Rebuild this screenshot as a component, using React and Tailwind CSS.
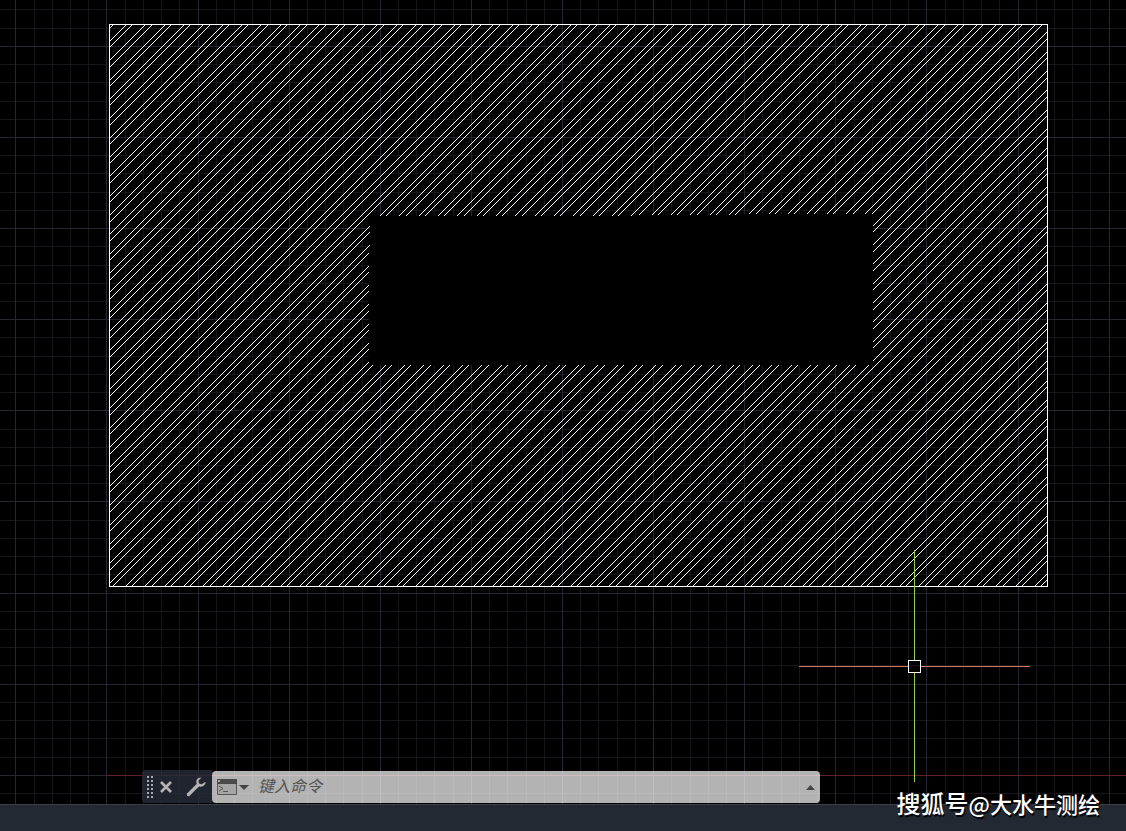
import React, { useState } from 'react';

const GRID_STEP = 91.11 / 5;
const HATCH_STEP = 19.342;

const frame = { left: 109, top: 24, right: 1047, bottom: 586 };

// one line per grid step, every fifth one is a major line
const gridLines = (origin, length) => {
  const lines = [];
  for (let i = 0; i * GRID_STEP + origin < length; i++) {
    lines.push({ pos: Math.floor(i * GRID_STEP + origin), major: i % 5 === 0 });
  }
  return lines;
};

const verticals = gridLines(15.8 - 91.11, 2600);
const horizontals = gridLines(46.35 - 91.11, 1600);

// ANSI32 style hatch: pairs of 45 degree lines, x + y = c
// each one is a filled sliver, one pixel wide on every row
const hatchPath = () => {
  const { left, top, right, bottom } = frame;
  let d = '';
  for (let n = -1; n < 78; n++) {
    [0, HATCH_STEP / 3].forEach((shift) => {
      const c = Math.round(150 + n * HATCH_STEP + shift);
      const x1 = Math.max(left, c - bottom);
      const x2 = Math.min(right, c - top);
      if (x2 > x1) {
        d += `M${x1 - 0.5} ${c - x1 + 1}h1L${x2 + 1.5} ${c - x2}h-1z`;
      }
    });
  }
  return d;
};

function Drawing() {
  return (
    <svg className="absolute inset-0 h-full w-full" shapeRendering="crispEdges" fill="none" aria-hidden="true">
      <g transform="translate(0.5 0.5)">
        {[false, true].map((major) => (
          <g key={String(major)} stroke={major ? '#242633' : '#15151a'}>
            {verticals.filter((line) => line.major === major).map((line) => (
              <line key={`v${line.pos}`} x1={line.pos} x2={line.pos} y1="-1" y2="3000" />
            ))}
            {horizontals.filter((line) => line.major === major).map((line) => (
              <line key={`h${line.pos}`} x1="-1" x2="4000" y1={line.pos} y2={line.pos} />
            ))}
          </g>
        ))}
      </g>
      <path d="M106 775H4000v1H106z" fill="#641f28" />
      <path d={hatchPath()} fill="#fff" />
      <rect x="109.5" y="24.5" width="938" height="562" stroke="#fff" />
      <path d="M370 216H632V215H740V214H873V365H369V290z" fill="#000" />

      {/* crosshair */}
      <path d="M799 666h109v1h-109zM921 666h109v1h-109z" fill="#d2785f" />
      <path d="M914 550h1v110h-1zM914 673h1v109h-1z" fill="#92d050" />
      <rect x="908.5" y="660.5" width="12" height="12" stroke="#fff" />
    </svg>
  );
}

function CommandLine() {
  const [command, setCommand] = useState('');

  return (
    <form
      onSubmit={(e) => e.preventDefault()}
      className="relative ml-[142px] flex h-[33px] w-[678px] max-w-full items-center"
    >
      <div className="flex h-full w-[70px] shrink-0 items-center rounded-l-sm bg-[#272d3a]/80">
        <svg className="ml-1 h-[22px] w-2 shrink-0" viewBox="0 0 8 22" fill="#a9abae" shapeRendering="crispEdges" aria-hidden="true">
          {[0, 4, 8, 12, 16, 20].map((y) => (
            <path key={y} d={`M1 ${y}h2v2h-2zM5 ${y}h2v2h-2z`} />
          ))}
        </svg>
        <button type="button" aria-label="关闭" className="ml-0.5 flex h-8 w-5 items-center justify-center">
          <svg className="h-3 w-3" viewBox="0 0 12 12" stroke="#b4b4b4" strokeWidth="2.6" aria-hidden="true">
            <path d="M1 1L11 11M11 1L1 11" />
          </svg>
        </button>
        <button type="button" aria-label="自定义" className="ml-2 flex h-8 w-6 items-center justify-center">
          <svg className="h-5 w-5" viewBox="0 0 20 20" aria-hidden="true">
            <path d="M2.500 17.500L12 8" stroke="#b4b4b4" strokeWidth="3.4" strokeLinecap="round" />
            <path d="M15.500 .5C11.500 .3 9.600 3.300 10.600 6.600L13.400 9.400C16.600 10.400 19.800 8.400 19.500 4.800L15.800 7.200L12.900 6.600L12.500 3.600z" fill="#b4b4b4" />
          </svg>
        </button>
      </div>
      <div className="flex h-8 min-w-0 flex-1 items-center rounded-sm bg-white/70">
        <button type="button" aria-label="最近使用的命令" className="ml-1 flex h-8 w-9 shrink-0 items-center">
          <svg className="h-4 w-9" viewBox="0 0 36 16" aria-hidden="true">
            <path d="M1.500 .5h19v15h-19z" fill="#a5a5a5" stroke="#555" />
            <path d="M1 0h20v5H1z" fill="#4a4a4a" />
            <path d="M2 1h2v2H2z" fill="#a5a5a5" />
            <path d="M3 7l4 2.500l-4 2.500M7 12.500h5" fill="none" stroke="#555" />
            <path d="M23 6h10l-5 5z" fill="#444" />
          </svg>
        </button>
        <input
          type="text"
          aria-label="命令"
          placeholder="键入命令"
          value={command}
          onChange={(e) => setCommand(e.target.value)}
          className="ml-1.5 h-8 min-w-0 flex-1 bg-transparent pb-1 font-['Noto_Sans_CJK_SC',sans-serif] text-base text-[#333] italic outline-none placeholder:text-[#555]"
        />
        <button type="button" aria-label="命令历史" className="flex h-8 w-5 items-center justify-center pt-0.5">
          <svg className="h-[5px] w-[9px]" viewBox="0 0 9 5" fill="#444" aria-hidden="true">
            <path d="M0 5L4.500 0L9 5z" />
          </svg>
        </button>
      </div>
    </form>
  );
}

function App() {
  return (
    <div className="relative flex min-h-screen flex-col overflow-hidden bg-black font-['Noto_Sans_CJK_SC',sans-serif]">
      <main className="relative flex flex-1 flex-col justify-end pb-px">
        <Drawing />
        <CommandLine />
      </main>
      <footer className="h-[27px] border-t border-[#3b4046] bg-[#222933]" />
      <p className="absolute right-[26px] bottom-3 text-[22px] leading-8 font-medium text-white [text-shadow:1px_2px_1px_#000]">
        <span className="text-2xl leading-8">搜狐号</span>@大水牛测绘
      </p>
    </div>
  );
}

export default App;
